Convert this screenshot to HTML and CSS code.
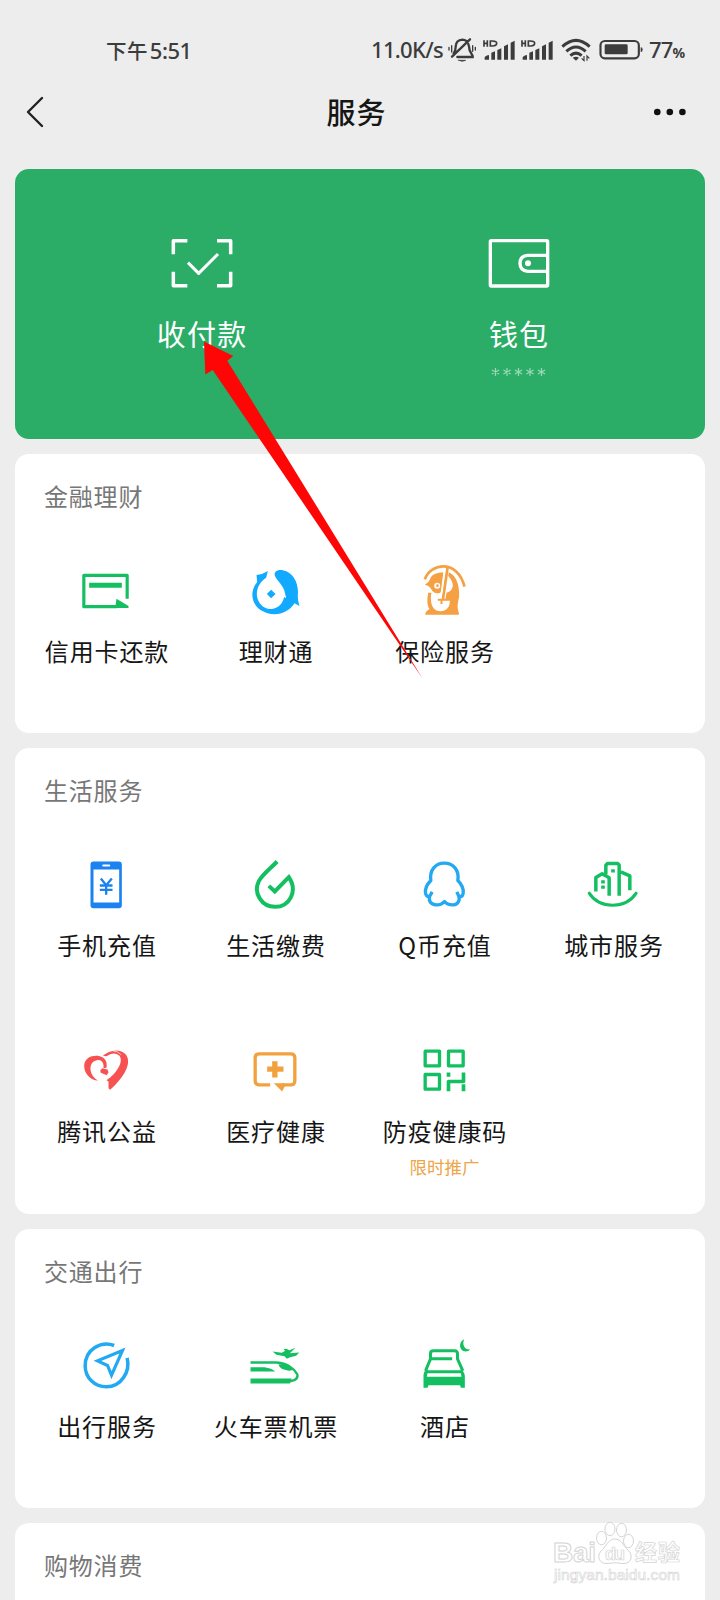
FILE: index.html
```html
<!DOCTYPE html>
<html lang="zh-CN">
<head>
<meta charset="utf-8">
<title>服务</title>
<link rel="stylesheet" href="styles.css">
</head>
<body>
<div class="screen">
  <header class="status">
    <div class="clock">下午<span class="clock-num">5:51</span></div>
    <div class="status-right">
      <span class="speed">11.0K/s</span>
      <svg class="bell" width="30" height="28" viewBox="261 48 90 84" fill="none" stroke="#3c3c3c" stroke-width="7" stroke-linecap="round">
        <path d="M281 100Q287 92 287 80Q288 60 307 59Q314 59 319 63M325 72Q328 82 329 91L338 108V111H292M276 110L330 58"/>
        <path d="M296 121H317Q307 127 296 121Z" fill="#3c3c3c" stroke-width="2"/>
        <path d="M267 82V90M275 77V96M338 77V94M346 82V90" stroke-width="4"/>
      </svg>
      <svg class="signal" width="32" height="28" viewBox="370 48 96 84" fill="#3c3c3c">
        <path d="M373 61V80M383 61V80M373 70H383M392 63V78H398Q411 78 411 70Q411 63 398 63Z" fill="none" stroke="#3c3c3c" stroke-width="5"/>
        <path d="M375 119V111Q382 105 388 105V119ZM395 98L406 94V119H395ZM413 90L425 85V119H413ZM433 79L445 73V119H433ZM453 68L465 62V119H453Z"/>
      </svg>
      <svg class="signal" width="32" height="28" viewBox="370 48 96 84" fill="#3c3c3c">
        <path d="M373 61V80M383 61V80M373 70H383M392 63V78H398Q411 78 411 70Q411 63 398 63Z" fill="none" stroke="#3c3c3c" stroke-width="5"/>
        <path d="M375 119V111Q382 105 388 105V119ZM395 98L406 94V119H395ZM413 90L425 85V119H413ZM433 79L445 73V119H433ZM453 68L465 62V119H453Z"/>
      </svg>
      <svg class="wifi" width="30" height="28" viewBox="603 48 90 84" fill="none" stroke="#3c3c3c" stroke-width="9">
        <path d="M607 80Q648 42 689 80M619 94Q648 68 677 94M631 107Q648 92 665 107"/>
        <path d="M638 113Q648 107 657 113L648 122Z" fill="#3c3c3c" stroke="none"/>
        <path d="M672 108V122L665 115M681 122V108L688 115" stroke-width="3.5"/>
      </svg>
      <svg class="battery" width="44" height="28" viewBox="718 48 132 84">
        <rect x="722.5" y="63" width="115" height="52" rx="13" fill="none" stroke="#3c3c3c" stroke-width="6.5"/>
        <rect x="735" y="73" width="69" height="30" rx="4" fill="#3c3c3c"/>
        <path d="M843 82Q849 82 849 89Q849 96 843 96Z" fill="#3c3c3c"/>
      </svg>
      <span class="percent">77<small>%</small></span>
    </div>
  </header>

  <nav class="nav">
    <svg class="back" width="20" height="34" viewBox="0 0 20 34" fill="none" stroke="#222" stroke-width="2.4" stroke-linecap="round" stroke-linejoin="round"><path d="M17 3L3 17L17 31"/></svg>
    <h1>服务</h1>
    <svg class="more" width="34" height="8" viewBox="0 0 34 8" fill="#111"><circle cx="4.3" cy="4" r="3.3"/><circle cx="16.800" cy="4" r="3.3"/><circle cx="29.400" cy="4" r="3.3"/></svg>
  </nav>

  <main class="cards">
    <section class="pay">
      <div class="pay-item">
        <svg width="66" height="54" viewBox="86 48 198 162" fill="none" stroke="#fff" stroke-width="10.500" stroke-linejoin="round">
          <path d="M99 103V62H141M230 62H271V103M271 155V197H230M141 197H99V155"/>
          <path d="M143 128L175 160L233 102" stroke-width="9"/>
        </svg>
        <span class="pay-label">收付款</span>
      </div>
      <div class="pay-item">
        <svg width="66" height="54" viewBox="1037 48 198 162" fill="none" stroke="#fff" stroke-width="10" stroke-linejoin="round">
          <rect x="1050" y="62" width="172" height="136" rx="3"/>
          <path d="M1222 106H1162Q1139 108 1139 130Q1139 152 1162 154H1222"/>
          <circle cx="1163" cy="130" r="9" fill="#fff" stroke="none"/>
        </svg>
        <span class="pay-label">钱包</span>
        <svg class="stars" width="56" height="12" viewBox="0 0 56 12" fill="none" stroke="#9bd8b5" stroke-width="1.2">
          <path d="M4.5 2V10M.9 4L8.1 8M.9 8L8.1 4M16 2V10M12.4 4L19.6 8M12.4 8L19.6 4M27.5 2V10M23.9 4L31.1 8M23.9 8L31.1 4M39 2V10M35.4 4L42.6 8M35.4 8L42.6 4M50.5 2V10M46.9 4L54.1 8M46.9 8L54.1 4"/>
        </svg>
      </div>
    </section>

    <section class="card">
      <h2>金融理财</h2>
      <div class="grid">
        <div class="item">
          <svg class="icon" viewBox="139.5 270 180 180">
            <path d="M293 386V316H163V410H262" fill="none" stroke="#14bf62" stroke-width="9.500" stroke-linejoin="round"/>
            <path d="M179 338H277V353H179ZM261 386L297 408V414H257Z" fill="#14bf62"/>
          </svg>
          <span class="label">信用卡还款</span>
        </div>
        <div class="item">
          <svg class="icon" viewBox="46.5 60 180 180">
            <path d="M81 105Q101 103 115 93L110 113C99 121 84 133 82 160C81 186 101 208 124 207C147 206 160 190 164 171L170 175L167 161C162 134 142 122 136 107C132 93 148 87 160 91C192 98 208 130 205 164Q204 180 210 198L195 190C177 218 145 229 112 219C66 205 57 156 83 126Z" fill="#12aaff"/>
            <path d="M125 149L138 162L125 175L112 162Z" fill="#12aaff"/>
          </svg>
          <span class="label">理财通</span>
        </div>
        <div class="item">
          <svg class="icon" viewBox="553.5 60 180 180">
            <path d="M586 118C603 69 684 56 705 140" fill="none" stroke="#f5a043" stroke-width="8"/>
            <path d="M586 134Q599 128 604 112Q612 98 642 97L636 155C629 162 612 163 605 147Q601 138 586 134ZM662 99C680 108 690 135 689 169C686 187 681 200 688 218V224H587Q588 214 600 207C593 198 592 180 596 158H606C601 178 606 202 618 210Q637 219 652 207C661 198 661 188 661 179L648 176L651 158C675 152 676 128 656 108L658 97Z" fill="#f5a043"/>
            <circle cx="623" cy="137" r="9" fill="#fff"/><circle cx="624" cy="137" r="4" fill="#f5a043"/>
            <path d="M654 84L640 180" stroke="#f5a043" stroke-width="8"/>
            <path d="M625 179H661M636 178V192" stroke="#f5a043" stroke-width="6"/>
            <path d="M646 84L634 172" stroke="#fff" stroke-width="5"/>
          </svg>
          <span class="label">保险服务</span>
        </div>
      </div>
    </section>

    <section class="card card-tall">
      <h2>生活服务</h2>
      <div class="grid">
        <div class="item">
          <svg class="icon" viewBox="109.5 43.5 180 180">
            <rect x="153" y="66" width="94" height="140" rx="9" fill="#1b82f0"/>
            <path d="M162 90H239V189H162Z" fill="#fff"/><path d="M191 78H209" stroke="#fff" stroke-width="6" stroke-linecap="round"/>
            <path d="M184 117L200 137L217 117M181 138H219M181 151H219M200 137V166" fill="none" stroke="#1b82f0" stroke-width="7"/>
          </svg>
          <span class="label">手机充值</span>
        </div>
        <div class="item">
          <svg class="icon" viewBox="616.5 43.5 180 180" fill="none" stroke="#14bf62" stroke-width="12">
            <path d="M713 66C693 87 669 104 658 125C640 162 668 202 706 202C748 203 777 157 748 113L706 156L688 139"/>
          </svg>
          <span class="label">生活缴费</span>
        </div>
        <div class="item">
          <svg class="icon" viewBox="103.5 43.5 180 180" fill="none" stroke="#23a9f2" stroke-width="10" stroke-linejoin="round">
            <path d="M158 157L152 168Q141 176 138 161C136 147 145 132 154 123C149 91 169 71 194 71C221 71 240 91 235 123C245 132 254 149 251 162Q247 177 237 168L232 157M151 168C146 185 154 195 170 196Q186 197 195 186Q204 197 222 196C235 195 243 183 237 168"/>
          </svg>
          <span class="label">Q币充值</span>
        </div>
        <div class="item">
          <svg class="icon" viewBox="610.5 43.5 180 180" fill="none" stroke="#14bf62" stroke-width="10.500" stroke-linejoin="round">
            <path d="M649 156V114L668 103L689 115V169M679 104V77L684 72H715L719 77V169M724 97L751 109V152"/>
            <path d="M629 161C660 209 739 209 770 161" stroke-width="9" stroke-linecap="round"/>
            <path d="M695 89H706V99H695ZM665 122H676V132H665ZM665 138H676V148H665Z" fill="#14bf62" stroke="none"/>
          </svg>
          <span class="label">城市服务</span>
        </div>
        <div class="item">
          <svg class="icon" viewBox="109.5 31.5 180 180" fill="#f75252">
            <path d="M176 153C152 153 133 130 134 107C136 84 160 75 181 80C199 85 204 99 201 115L192 116C194 98 185 89 172 92C146 97 146 136 176 153Z"/>
            <path d="M190 79C208 62 241 55 259 75C279 101 253 144 212 181L207 176V156L201 152C233 132 254 94 239 78Q222 65 201 80Z"/>
            <path d="M188 116L204 120L207 128L202 137L184 130L182 124Z"/><path d="M220 64Q235 64 245 76" fill="none" stroke="#fff" stroke-width="2"/>
          </svg>
          <span class="label">腾讯公益</span>
        </div>
        <div class="item">
          <svg class="icon" viewBox="616.5 31.5 180 180">
            <path d="M692 166H659Q647 166 647 153V85Q647 73 659 73H754Q766 73 766 85V153Q766 166 754 166H727" fill="none" stroke="#f2a13f" stroke-width="10"/>
            <path d="M703 161H736V170L728 186ZM698 95H714V111H732V127H714V144H698V127H683V111H698Z" fill="#f2a13f"/>
          </svg>
          <span class="label">医疗健康</span>
        </div>
        <div class="item">
          <svg class="icon" viewBox="163.5 31.5 180 180" fill="none" stroke="#14bf62" stroke-width="10" stroke-linejoin="round">
            <path d="M197 65H240V109H197ZM267 65H311V109H267ZM197 135H240V179H197Z"/>
            <path d="M267 185V156H312V129M267 129V142M312 164V185" stroke-width="11"/>
          </svg>
          <span class="label">防疫健康码</span>
          <span class="promo">限时推广</span>
        </div>
      </div>
    </section>

    <section class="card">
      <h2>交通出行</h2>
      <div class="grid">
        <div class="item">
          <svg class="icon" viewBox="109.5 43.5 180 180" fill="none" stroke="#23a9f2" stroke-width="10.500">
            <path d="M224 75C185 60 137 86 137 136C137 172 165 199 201 199C245 199 273 154 263 112"/>
            <path d="M249 90L174 121L204 135L216 164Z" stroke-width="9.500"/>
          </svg>
          <span class="label">出行服务</span>
        </div>
        <div class="item">
          <svg class="icon" viewBox="616.5 43.5 180 180" fill="#14bf62">
            <path d="M633 140H675Q697 143 707 153H633ZM633 174H757L751 189H633ZM717 132Q734 129 746 132L764 147Q750 154 733 147Q720 143 717 132Z"/>
            <path d="M633 126H712C742 128 764 144 773 161Q777 172 764 179Q756 183 742 183" fill="none" stroke="#14bf62" stroke-width="7"/>
            <path d="M699 93L727 97L737 91L732 86L740 85L750 89L768 82L751 98L779 96L770 106L752 110L742 115L735 107L711 103Z"/>
          </svg>
          <span class="label">火车票机票</span>
        </div>
        <div class="item">
          <svg class="icon" viewBox="163.5 43.5 180 180">
            <path d="M213 115V99Q213 91 222 91H285Q295 91 294 101V115L310 151M213 115L198 151M213 115H278M201 154H307" fill="none" stroke="#14bf62" stroke-width="9"/>
            <path d="M192 202V163Q194 147 206 147L202 169H306L302 147Q314 151 316 166V202H304L302 194H207L204 202ZM314 56C296 64 298 91 318 93Q328 93 332 87C315 88 307 72 314 56Z" fill="#14bf62"/>
          </svg>
          <span class="label">酒店</span>
        </div>
      </div>
    </section>

    <section class="card">
      <h2>购物消费</h2>
    </section>
  </main>

  <svg class="arrow" width="220" height="338" viewBox="204 341 220 338"><path d="M204 341.5L233.3 356L227.3 360.7L422.5 678.5L212.7 370L205.3 374.5Z" fill="#ff0606"/></svg>

  <svg class="watermark" width="140" height="72" viewBox="546 1516 140 72" fill="#fff" stroke="#d4d4d4" stroke-width="1">
    <ellipse cx="601.5" cy="1538" rx="5" ry="6.7"/><ellipse cx="610" cy="1529" rx="5" ry="6.7"/><ellipse cx="621.5" cy="1530" rx="5" ry="6.7"/><ellipse cx="628.5" cy="1541" rx="5" ry="6.7"/>
    <path d="M614.500 1539C608 1539 606 1547 601 1551C596 1557 600 1564 607 1563.500Q615 1562 623 1563.500C631 1564 634 1556 628 1550C623 1546 622 1539 614.500 1539Z"/>
    <text class="wm-brand" x="553" y="1562" textLength="43">Bai</text>
    <text class="wm-du" x="605" y="1560" textLength="20">du</text>
    <text class="wm-cjk" x="635" y="1560" textLength="45">经验</text>
    <text class="wm-url" x="554" y="1579.500" textLength="126">jingyan.baidu.com</text>
  </svg>
</div>
</body>
</html>
```
FILE: styles.css
```css
* { box-sizing: border-box; }
body {
  margin: 0;
  background: #ededed;
  font-family: "Noto Sans CJK SC", sans-serif;
  color: #161616;
}
.screen {
  position: relative;
  width: 720px;
  height: 1600px;
  overflow: hidden;
}
svg { display: block; flex: none; }

.status {
  display: flex;
  justify-content: space-between;
  height: 76px;
  padding: 36px 33px 12px 106px;
  color: #3c3c3c;
  line-height: 28px;
}
.clock { font-size: 20.5px; white-space: nowrap; letter-spacing: .4px; font-weight: 500; }
.clock-num, .speed, .percent {
  font-family: "Noto Sans", sans-serif;
  font-size: 22px;
  font-weight: 500;
}
.clock-num { margin-left: 2px; letter-spacing: -.5px; }
.speed, .percent { position: relative; top: -1px; }
.status-right { display: flex; width: 316px; white-space: nowrap; }
.speed { width: 76px; letter-spacing: -.7px; }
.signal { margin-left: 6px; }
.wifi { margin-left: 8px; }
.battery { margin-left: 8px; }
.percent { margin-left: 6px; letter-spacing: -.8px; }
.percent small { font-size: 14px; font-weight: 700; }

.nav {
  display: flex;
  align-items: center;
  justify-content: space-between;
  height: 71px;
  padding: 0 33px 0 25px;
}
.nav h1 {
  margin: -2px 0 0 15px;
  font-size: 29px;
  font-weight: 500;
  line-height: 40px;
  letter-spacing: 1px;
}

.cards {
  display: flex;
  flex-direction: column;
  gap: 15px;
  padding: 22px 15px 0;
}
.pay {
  display: flex;
  height: 270px;
  padding: 67px 28px 0;
  border-radius: 14px;
  background: #2bad67;
  color: #fff;
}
.pay-item {
  display: flex;
  flex: 1;
  flex-direction: column;
  align-items: center;
}
.pay-label {
  margin-top: 23px;
  font-size: 29px;
  line-height: 40px;
  letter-spacing: 1.2px;
  margin-right: -1.2px;
}
.stars { margin-top: 13px; }

.card {
  height: 279px;
  flex: none;
  padding: 22px 7px 0;
  border-radius: 14px;
  background: #fff;
}
.card-tall { height: 466px; }
.card h2 {
  margin: 0 0 0 22px;
  font-size: 24px;
  font-weight: 400;
  line-height: 40px;
  letter-spacing: .8px;
  color: #777;
}
.grid {
  display: grid;
  grid-template-columns: repeat(4, 169px);
  grid-auto-rows: 186px;
  padding-top: 44px;
}
.item {
  display: flex;
  flex-direction: column;
  align-items: center;
}
.icon { width: 60px; height: 60px; margin-right: 1px; }
.label {
  margin-top: 13px;
  margin-right: -1px;
  font-size: 24px;
  line-height: 36px;
  letter-spacing: .9px;
  white-space: nowrap;
}
.promo {
  margin-top: 5px;
  font-size: 17.5px;
  line-height: 26px;
  color: #eda548;
}

.arrow { position: absolute; left: 204px; top: 341px; }
.watermark { position: absolute; left: 546px; top: 1516px; }
.wm-brand { font: bold 28px "Liberation Sans", sans-serif; }
.wm-du { font: bold 18px "Liberation Sans", sans-serif; stroke-width: .7px; }
.wm-cjk { font: bold 22px "Noto Sans CJK SC", sans-serif; stroke-width: .7px; }
.wm-url { font: 15.5px "Liberation Sans", sans-serif; stroke-width: .6px; }
```
